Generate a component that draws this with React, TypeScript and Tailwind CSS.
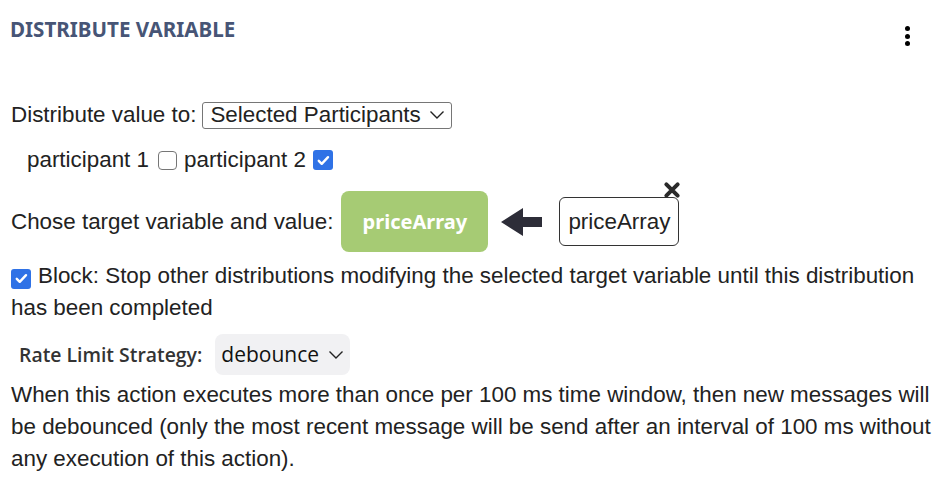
import { useState } from "react";

const Check = ({ checked, onToggle, size = 19 }: { checked: boolean; onToggle: () => void; size?: number }) => (
  <span
    onClick={onToggle}
    style={{ width: size, height: size }}
    className={
      checked
        ? "inline-flex items-center justify-center rounded-[3px] bg-[#2f72e6] cursor-pointer"
        : "inline-flex items-center justify-center rounded-[4px] border-[1.5px] border-[#767676] bg-white cursor-pointer"
    }
  >
    {checked && (
      <svg viewBox="0 0 16 16" className="w-[74%] h-[74%]">
        <path d="M3 8.5l3.2 3.2L13 4.5" fill="none" stroke="white" strokeWidth="2.6" strokeLinecap="round" strokeLinejoin="round" />
      </svg>
    )}
  </span>
);

const Chevron = () => (
  <svg viewBox="0 0 16 10" className="w-[16px] h-[10px]">
    <path d="M1.5 1.5l6.5 6.5 6.5-6.5" fill="none" stroke="#222" strokeWidth="1.4" />
  </svg>
);

const DistributeVariable = () => {
  const [p1, setP1] = useState(false);
  const [p2, setP2] = useState(true);
  const [block, setBlock] = useState(true);

  return (
    <div className="w-[948px] h-[486px] bg-white overflow-hidden font-['Liberation_Sans',Arial,sans-serif] text-[22.4px] text-[#222]">
      {/* header */}
      <div className="flex items-start justify-between pl-[10px] pr-[38px] pt-[16px]">
        <h2 className="font-['Noto_Sans',sans-serif] font-bold text-[20.6px] leading-[26px] text-[#475576]">
          DISTRIBUTE VARIABLE
        </h2>
        <div className="flex flex-col gap-[2.5px] pt-[10px]">
          <span className="w-[5px] h-[5px] rounded-full bg-black" />
          <span className="w-[5px] h-[5px] rounded-full bg-black" />
          <span className="w-[5px] h-[5px] rounded-full bg-black" />
        </div>
      </div>

      <div className="px-[11px] pt-[55px]">
        {/* distribute to */}
        <div className="flex items-center h-[28px]">
          <span>Distribute value to:</span>
          <div className="ml-[6px] flex items-center justify-between w-[250px] h-[27px] border border-[#767676] rounded-[3px] pl-[7px] pr-[6px]">
            <span>Selected Participants</span>
            <Chevron />
          </div>
        </div>

        {/* participants */}
        <div className="flex items-center h-[28px] mt-[17px] pl-[16px]">
          <span>participant 1</span>
          <span className="ml-[9px] mr-[7px] flex">
            <Check checked={p1} onToggle={() => setP1(!p1)} />
          </span>
          <span>participant 2</span>
          <span className="ml-[7px] flex">
            <Check checked={p2} onToggle={() => setP2(!p2)} size={20} />
          </span>
        </div>

        {/* target variable */}
        <div className="flex items-center mt-[17px] h-[61px]">
          <span>Chose target variable and value:</span>
          <div className="ml-[8px] w-[147px] h-[61px] rounded-[8px] bg-[#a6cb74] flex items-center justify-center font-['Noto_Sans',sans-serif] font-bold text-[20px] text-white">
            priceArray
          </div>
          <svg viewBox="0 0 42 28" className="ml-[13px] w-[42px] h-[28px]">
            <path d="M0 14L22 0V9H41V19H22V28Z" fill="#2d2d38" />
          </svg>
          <div className="relative ml-[16px] w-[120px] h-[49px] border border-[#333] rounded-[6px] flex items-center justify-center">
            priceArray
            <svg viewBox="0 0 16 16" className="absolute -top-[17px] right-[-3px] w-[18px] h-[18px]">
              <path d="M3 3L13 13M13 3L3 13" stroke="#2a2a2a" strokeWidth="3.6" strokeLinecap="round" />
            </svg>
          </div>
        </div>

        {/* block */}
        <div className="mt-[8px] leading-[32px]">
          <span className="inline-flex align-[-3px] mr-[7px]">
            <Check checked={block} onToggle={() => setBlock(!block)} size={20} />
          </span>
          Block: Stop other distributions modifying the selected target variable until this distribution has been completed
        </div>

        {/* rate limit */}
        <div className="flex items-center mt-[10px] pl-[8px]">
          <span className="font-['Open_Sans',sans-serif] font-semibold text-[19.4px] text-[#333]">Rate Limit Strategy:</span>
          <div className="ml-[13px] flex items-center gap-[9px] h-[41px] px-[6px] rounded-[8px] bg-[#f1f1f3] font-['Open_Sans',sans-serif] text-[21px] text-[#111]">
            <span>debounce</span>
            <Chevron />
          </div>
        </div>

        {/* explanation */}
        <p className="mt-[4px] leading-[32px]">
          When this action executes more than once per 100 ms time window, then new messages will be debounced (only the most recent message will be send after an interval of 100 ms without any execution of this action).
        </p>
      </div>
    </div>
  );
};

export default function App() {
  return <DistributeVariable />;
}
